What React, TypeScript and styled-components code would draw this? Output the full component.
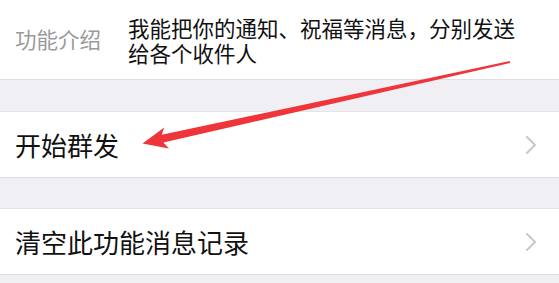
import React from "react";
import styled, { createGlobalStyle } from "styled-components";

const Global = createGlobalStyle`
  html, body { margin: 0; padding: 0; background: #efeff4; }
  body { font-family: "Noto Sans CJK SC", "Noto Sans", sans-serif; }
`;

const Page = styled.div`
  position: relative;
  width: 559px;
  height: 283px;
  overflow: hidden;
  background: #efeff4;
  display: flex;
  flex-direction: column;
`;

const InfoSection = styled.div`
  box-sizing: border-box;
  height: 80px;
  background: #fff;
  border-bottom: 1px solid #dedee3;
  display: flex;
  align-items: center;
  padding: 0 30px 0 15px;
`;

const InfoLabel = styled.div`
  flex: 0 0 113px;
  font-size: 21.5px;
  line-height: 25px;
  color: #9a9a9a;
  margin-top: -3px;
`;

const InfoText = styled.div`
  flex: 1;
  font-size: 21.5px;
  line-height: 25px;
  color: #111;
  margin-top: 1px;
`;

const Gap = styled.div<{ $h: number }>`
  height: ${(p) => p.$h}px;
  flex: none;
`;

const Cell = styled.div`
  box-sizing: border-box;
  height: 67px;
  flex: none;
  background: #fff;
  border-top: 1px solid #e4e4e8;
  border-bottom: 1px solid #dedee3;
  display: flex;
  align-items: center;
  justify-content: space-between;
  padding: 0 22px 0 15px;
`;

const CellTitle = styled.span`
  font-size: 26px;
  color: #111;
  line-height: 30px;
`;

const Chevron = styled.svg`
  width: 12px;
  height: 20px;
  flex: none;
`;

const Overlay = styled.svg`
  position: absolute;
  left: 0;
  top: 0;
  pointer-events: none;
`;

function Arrow() {
  return (
    <Chevron viewBox="0 0 12 20">
      <path d="M2 2 L10 10 L2 18" fill="none" stroke="#c7c7cc" strokeWidth="2" strokeLinecap="round" strokeLinejoin="round" />
    </Chevron>
  );
}

export default function App() {
  return (
    <>
      <Global />
      <Page>
        <InfoSection>
          <InfoLabel>功能介绍</InfoLabel>
          <InfoText>我能把你的通知、祝福等消息，分别发送给各个收件人</InfoText>
        </InfoSection>
        <Gap $h={31} />
        <Cell>
          <CellTitle>开始群发</CellTitle>
          <Arrow />
        </Cell>
        <Gap $h={30} />
        <Cell>
          <CellTitle>清空此功能消息记录</CellTitle>
          <Arrow />
        </Cell>
        <Overlay width="559" height="283" viewBox="0 0 559 283">
          <polygon
            points="142.5,143.5 164.2,127.5 161.7,134.8 509.8,61 510.2,63 163.4,142.6 169,148.5"
            fill="#f0353a"
          />
        </Overlay>
      </Page>
    </>
  );
}
